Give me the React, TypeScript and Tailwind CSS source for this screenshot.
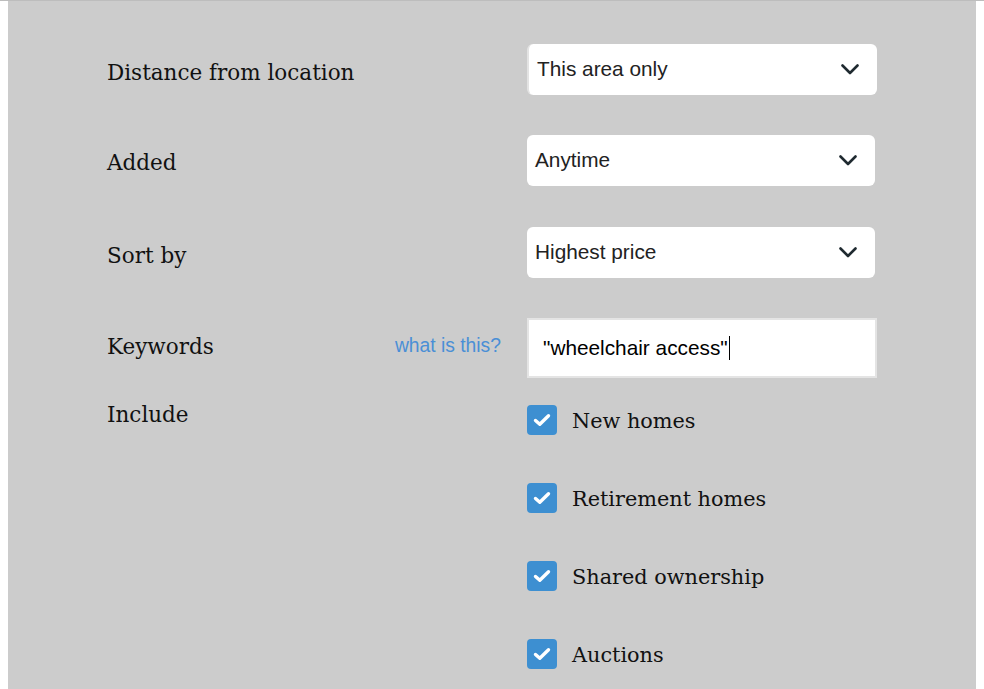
import React from "react";

const serif = { fontFamily: '"DejaVu Serif", "Liberation Serif", serif' };
const sans = { fontFamily: '"Liberation Sans", Arial, sans-serif' };

function Chevron() {
  return (
    <svg width="18" height="11" viewBox="0 0 18 11" fill="none">
      <path d="M1.5 1.5 L9 9 L16.5 1.5" stroke="#1f2a30" strokeWidth="2.6" strokeLinecap="round" strokeLinejoin="round" />
    </svg>
  );
}

function SelectBox({ text, wide, first }: { text: string; wide?: boolean; first?: boolean }) {
  return (
    <div
      className={`flex items-center justify-between h-[51px] rounded-[6px] bg-white ${wide ? "w-[350px]" : "w-[348px]"} ${first ? "pl-[8px] border-l-2 border-[#e3e3e3]" : "pl-2"} pr-[18px]`}
    >
      <span className="text-[20.8px] text-[#222] mt-[-2px]" style={sans}>{text}</span>
      <Chevron />
    </div>
  );
}

function Check({ label }: { label: string }) {
  return (
    <div className="flex items-center h-[30px]">
      <div className="w-[30px] h-[30px] rounded-[4px] bg-[#3d8fd1] flex items-center justify-center">
        <svg width="18" height="14" viewBox="0 0 18 14" fill="none">
          <path d="M2.5 7.5 L6.8 11.3 L15.5 2.8" stroke="white" strokeWidth="3.4" strokeLinecap="round" strokeLinejoin="round" />
        </svg>
      </div>
      <span className="ml-[15px] text-[20.8px] text-[#111] pt-[4px]" style={serif}>{label}</span>
    </div>
  );
}

export default function App() {
  return (
    <div className="w-[984px] h-[689px] bg-white overflow-hidden border-t border-[#bdbdbd]">
      <div className="ml-[8px] w-[968px] h-[688px] bg-[#cccccc] pl-[99px] pt-[43px]">
        <div className="flex items-center">
          <div className="w-[420px] text-[21.5px] text-[#111] pt-[7px]" style={serif}>Distance from location</div>
          <SelectBox text="This area only" wide first />
        </div>
        <div className="flex items-center mt-[40px]">
          <div className="w-[420px] text-[21.5px] text-[#111] pt-[6px]" style={serif}>Added</div>
          <SelectBox text="Anytime" />
        </div>
        <div className="flex items-center mt-[41px]">
          <div className="w-[420px] text-[21.5px] text-[#111] pt-[7px]" style={serif}>Sort by</div>
          <SelectBox text="Highest price" />
        </div>
        <div className="flex items-center mt-[40px]">
          <div className="w-[420px] flex items-center justify-between pr-[26px]">
            <span className="text-[21.5px] text-[#111] mt-[-2px]" style={serif}>Keywords</span>
            <span className="text-[19.3px] text-[#4a8fd6] mt-[-4px]" style={sans}>what is this?</span>
          </div>
          <div className="w-[350px] h-[60px] bg-white border-2 border-[#e4e4e4] flex items-center pl-[14px]">
            <span className="text-[20.8px] text-black" style={sans}>"wheelchair access"</span>
            <span className="w-px h-[24px] bg-black ml-[1px]" />
          </div>
        </div>
        <div className="flex items-start mt-[27px]">
          <div className="w-[420px] text-[21.5px] text-[#111] mt-[-6px]" style={serif}>Include</div>
          <div className="flex flex-col gap-[48px]">
            <Check label="New homes" />
            <Check label="Retirement homes" />
            <Check label="Shared ownership" />
            <Check label="Auctions" />
          </div>
        </div>
      </div>
    </div>
  );
}
